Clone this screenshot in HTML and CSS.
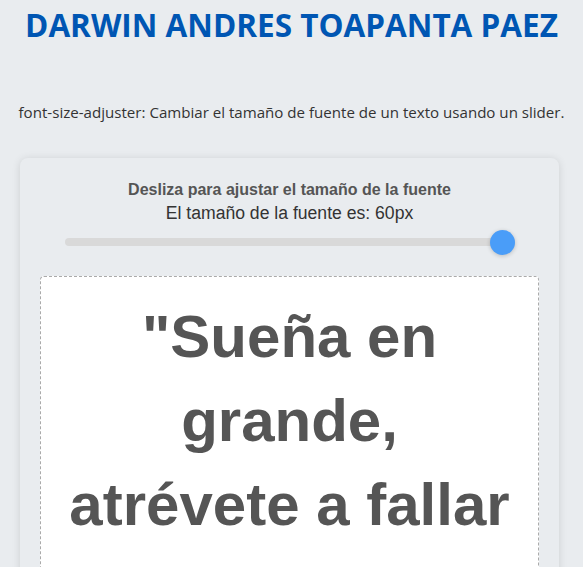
FILE: index.html
```html
<!DOCTYPE html>
<html lang="es">
<head>
<meta charset="utf-8">
<title>Font size adjuster</title>
<link rel="stylesheet" href="styles.css">
</head>
<body>
  <h1 class="title">DARWIN ANDRES TOAPANTA PAEZ</h1>
  <p class="subtitle">font-size-adjuster: Cambiar el tamaño de fuente de un texto usando un slider.</p>
  <div class="card">
    <div class="controls">
      <label class="label" for="size">Desliza para ajustar el tamaño de la fuente</label>
      <div class="value">El tamaño de la fuente es: 60px</div>
      <input class="slider" id="size" type="range" min="10" max="60" value="60">
    </div>
    <div class="preview">
      <p class="quote">"Sueña en grande, atrévete a fallar</p>
    </div>
  </div>
</body>
</html>
```
FILE: styles.css
```css
html, body {
  margin: 0;
  padding: 0;
  background: #e9ecef;
  overflow: hidden;
}
body {
  font-family: "Open Sans", "Noto Sans", sans-serif;
  color: #333;
}
.title {
  margin: 0;
  padding-top: 5px;
  font-size: 31.5px;
  font-weight: 700;
  color: #0056b3;
  text-align: center;
  line-height: 40px;
}
.subtitle {
  margin: 57px 0 0;
  font-size: 15.1px;
  line-height: 20px;
  text-align: center;
  color: #333;
  white-space: nowrap;
}
.card {
  margin: 36px 24px 0 20px;
  padding: 22px 20px 20px;
  border-radius: 8px;
  background: #e9ecef;
  box-shadow: 0 1px 8px rgba(0, 0, 0, 0.12);
}
.controls {
  display: flex;
  flex-direction: column;
  align-items: center;
  font-family: "Liberation Sans", Arial, sans-serif;
}
.label {
  font-size: 16px;
  font-weight: 700;
  color: #555;
  line-height: 20px;
}
.value {
  font-size: 17.6px;
  color: #333;
  line-height: 22px;
  margin-top: 2px;
}
.slider {
  -webkit-appearance: none;
  appearance: none;
  width: 450px;
  height: 8px;
  margin: 14px 0 0;
  border-radius: 5px;
  background: #d9d9d9;
  outline: none;
}
.slider::-webkit-slider-thumb {
  -webkit-appearance: none;
  appearance: none;
  width: 25px;
  height: 25px;
  border-radius: 50%;
  background: #4a9df8;
  box-shadow: 0 1px 4px rgba(0, 0, 0, 0.2);
  cursor: pointer;
}
.preview {
  margin-top: 30px;
  background: #fff;
  border: 1px dashed #aaa;
  border-radius: 4px;
  padding: 18px 20px 40px;
}
.quote {
  margin: 0;
  font-family: "Liberation Sans", Arial, sans-serif;
  font-size: 60px;
  font-weight: 700;
  line-height: 84px;
  color: #555;
  text-align: center;
}
```
